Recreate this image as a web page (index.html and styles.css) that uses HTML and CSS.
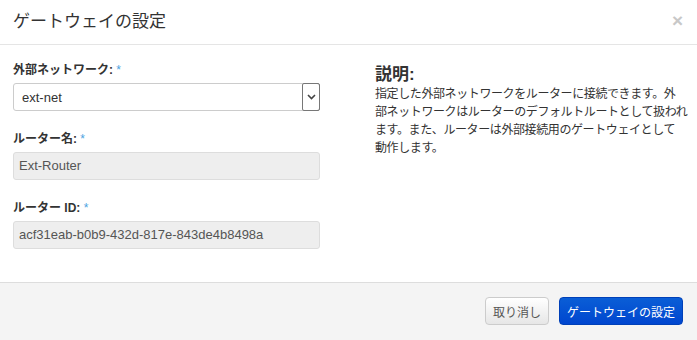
FILE: index.html
```html
<!DOCTYPE html>
<html lang="ja">
<head>
  <meta charset="utf-8" />
  <title>ゲートウェイの設定</title>
  <link rel="stylesheet" href="styles.css">
</head>
<body>
  <div class="modal">
    <div class="modal-header">
      <h3>ゲートウェイの設定</h3>
      <span class="close">×</span>
    </div>

    <div class="modal-body">
      <div class="left">
        <div class="group">
          <label>外部ネットワーク: <span class="req">*</span></label>
          <div class="select">
            <span class="val">ext-net</span>
            <span class="arrow">
              <svg width="9" height="6" viewBox="0 0 9 6"><path d="M1 1 L4.5 4.5 L8 1" fill="none" stroke="#444" stroke-width="1.6"/></svg>
            </span>
          </div>
        </div>
        <div class="group">
          <label>ルーター名: <span class="req">*</span></label>
          <div class="input">Ext-Router</div>
        </div>
        <div class="group">
          <label>ルーター ID: <span class="req">*</span></label>
          <div class="input">acf31eab-b0b9-432d-817e-843de4b8498a</div>
        </div>
      </div>

      <div class="right">
        <h3>説明:</h3>
        <p>指定した外部ネットワークをルーターに接続できます。外<br>部ネットワークはルーターのデフォルトルートとして扱われ<br>ます。また、ルーターは外部接続用のゲートウェイとして<br>動作します。</p>
      </div>
    </div>

    <div class="modal-footer">
      <button type="button" class="btn">取り消し</button>
      <button type="button" class="btn btn-primary">ゲートウェイの設定</button>
    </div>
  </div>
</body>
</html>
```

FILE: styles.css
```css
*{box-sizing:border-box;}
body{margin:0;background:#fff;color:#333;font-family:"Liberation Sans","Noto Sans CJK JP",sans-serif;}

.modal{width:697px;height:340px;display:flex;flex-direction:column;overflow:hidden;}

.modal-header{
  flex-shrink:0;
  height:45px;
  display:flex;
  align-items:center;
  justify-content:space-between;
  padding:0 14px 0 13px;
  border-bottom:1px solid #e5e5e5;
}
.modal-header h3{margin:0;font-size:17px;font-weight:normal;color:#333;line-height:20px;}
.close{font-size:19px;font-weight:bold;color:#c8c8c8;line-height:20px;margin-top:-2px;}

.modal-body{
  flex:1;
  display:flex;
  padding:16px 13px 0 13px;
  gap:55px;
}
.left{width:307px;flex-shrink:0;}
.group{margin-bottom:19px;}
.group label{display:block;font-size:12px;font-weight:bold;line-height:18px;margin-bottom:4px;color:#333;}
.req{color:#4aa3df;font-weight:normal;}

.select{
  height:28px;
  border:1px solid #ccc;
  border-radius:3px;
  display:flex;
  align-items:center;
  justify-content:space-between;
  padding-left:8px;
  font-size:13px;
  color:#333;
  background:#fff;
}
.select .arrow{
  width:18px;
  height:28px;
  margin-right:-1px;
  border:1px solid #777;
  border-radius:2px;
  display:flex;
  align-items:center;
  justify-content:center;
}

.input{
  height:28px;
  border:1px solid #ddd;
  border-radius:3px;
  background:#eee;
  padding-left:5px;
  font-size:13px;
  line-height:26px;
  color:#555;
}

.right{flex:1;padding-top:4px;}
.right h3{margin:0;font-size:17px;line-height:20px;font-weight:bold;color:#333;}
.right p{margin:0;font-size:12px;line-height:18px;color:#333;white-space:nowrap;letter-spacing:-0.4px;}

.modal-footer{
  flex-shrink:0;
  height:58px;
  border-top:1px solid #ddd;
  background:#f4f4f4;
  display:flex;
  justify-content:flex-end;
  align-items:flex-start;
  gap:10px;
  padding:14px 14px 0 0;
}
.btn{
  height:28px;
  padding:0 7px;
  font-family:inherit;
  font-size:12px;
  color:#555;
  border:1px solid #ccc;
  border-radius:4px;
  background:linear-gradient(#fff,#e6e6e6);
}
.btn-primary{
  color:#fff;
  border-color:#0040b8;
  background:linear-gradient(#0a5ed6,#0046cf);
}
```
